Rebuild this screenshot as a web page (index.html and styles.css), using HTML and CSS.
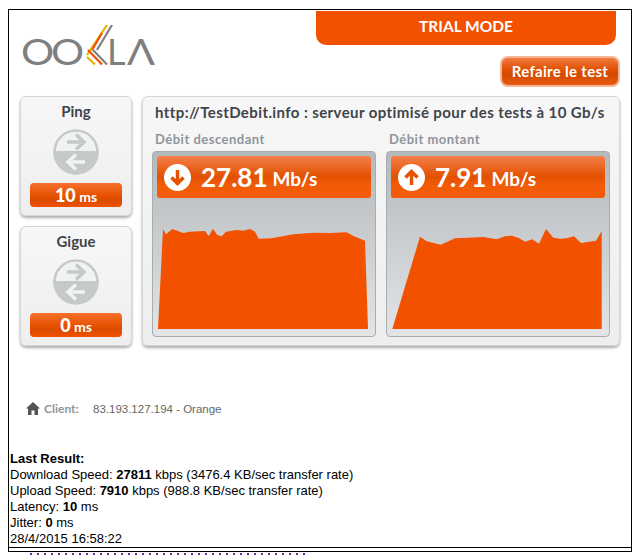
FILE: index.html
```html
<!DOCTYPE html>
<html lang="en">
<head>
<meta charset="UTF-8">
<title>Ookla speed test</title>
<link rel="stylesheet" href="styles.css">
</head>
<body>
<div class="frame">
    <div class="widget">
        <div class="header">
            <svg class="logo" width="140" height="50" viewBox="0 0 140 50">
                <g class="logo-text">
                    <text transform="translate(-1 39.500) scale(1.150 1)">O</text>
                    <text transform="translate(29 39.500) scale(1.150 1)">O</text>
                    <text transform="translate(85 39.500)">L</text>
                    <text transform="translate(105 39.500) scale(1.150 1)">Λ</text>
                </g>
                <g fill="none" stroke-width="2.200">
                    <path d="M65 30L85 0" stroke="#eab308"/>
                    <path d="M70 25L80 8" stroke="#f25100"/>
                    <path d="M75 25L90 0" stroke="#808080"/>
                    <path d="M65 32L73 39.500" stroke="#eab308"/>
                    <path d="M66 25L80 39.500" stroke="#f25100"/>
                    <path d="M71 25L85 39.500" stroke="#808080"/>
                </g>
            </svg>
            <div class="header-right">
                <div class="trial">TRIAL MODE</div>
                <div class="retest">Refaire le test</div>
            </div>
        </div>
        <div class="main">
            <div class="side">
                <div class="card">
                    <div class="card-title">Ping</div>
                    <svg class="ping-icon" width="46" height="46" viewBox="0 0 46 46">
                        <circle cx="23" cy="23" r="21.500" fill="#f1f2f2" stroke="#c5c9ca" stroke-width="2.500"/>
                        <path d="M0.500 22H45.500A22.500 22.500 0 0 1 0.500 22Z" fill="#c5c9ca"/>
                        <path d="M14 13H30M23 5.500L31 13L23 20.500" fill="none" stroke="#c5c9ca" stroke-width="3.500"/>
                        <path d="M32 33H16M23 25.500L15 33L23 40.500" fill="none" stroke="#f1f2f2" stroke-width="3.500"/>
                    </svg>
                    <div class="pill"><b>10</b> ms</div>
                </div>
                <div class="card">
                    <div class="card-title">Gigue</div>
                    <svg class="ping-icon" width="46" height="46" viewBox="0 0 46 46">
                        <circle cx="23" cy="23" r="21.500" fill="#f1f2f2" stroke="#c5c9ca" stroke-width="2.500"/>
                        <path d="M0.500 22H45.500A22.500 22.500 0 0 1 0.500 22Z" fill="#c5c9ca"/>
                        <path d="M14 13H30M23 5.500L31 13L23 20.500" fill="none" stroke="#c5c9ca" stroke-width="3.500"/>
                        <path d="M32 33H16M23 25.500L15 33L23 40.500" fill="none" stroke="#f1f2f2" stroke-width="3.500"/>
                    </svg>
                    <div class="pill"><b>0</b> ms</div>
                </div>
            </div>
            <div class="panel">
                <div class="panel-title">http://TestDebit.info : serveur optimisé pour des tests à 10 Gb/s</div>
                <div class="gauges">
                    <div class="gauge-col">
                        <div class="gauge-label">Débit descendant</div>
                        <div class="gauge">
                            <div class="speed">
                                <svg width="27" height="27" viewBox="0 0 27 27">
                                    <circle cx="13.500" cy="13.500" r="13.500" fill="#fff"/>
                                    <path d="M13.500 6V19M7.500 13.500L13.500 19.500L19.500 13.500" fill="none" stroke="#e65100" stroke-width="3.500"/>
                                </svg>
                                <span class="speed-num">27.81</span> <span class="speed-unit">Mb/s</span>
                            </div>
                            <svg class="chart" width="214" height="131" viewBox="0 0 214 131">
                                <polygon fill="#f25100" points="1,131 6,31.3 9,36.3 15.3,31 26.3,35 33,33.7 48,33 51.7,38 56,30.7 60.3,37 64.7,38.3 69,33.7 79.7,32 86.3,32.7 93,31 98,33.7 101.7,40.7 114.7,40.3 136.3,36.3 156.3,34.7 173,35 189.7,34.3 196.3,38 208,42.7 211,131"/>
                            </svg>
                        </div>
                    </div>
                    <div class="gauge-col">
                        <div class="gauge-label">Débit montant</div>
                        <div class="gauge">
                            <div class="speed">
                                <svg width="27" height="27" viewBox="0 0 27 27">
                                    <circle cx="13.500" cy="13.500" r="13.500" fill="#fff"/>
                                    <path d="M13.500 21V8M7.500 13.500L13.500 7.500L19.500 13.500" fill="none" stroke="#e65100" stroke-width="3.500"/>
                                </svg>
                                <span class="speed-num">7.91</span> <span class="speed-unit">Mb/s</span>
                            </div>
                            <svg class="chart" width="214" height="131" viewBox="0 0 214 131">
                                <polygon fill="#f25100" points="1.3,131 29,38.7 35.7,43.3 49.7,46.7 64,40.3 92.3,39 105.7,41.3 114,38.3 120.7,37.7 127.3,39.7 134,43.7 141.3,41.3 148,45.7 155,31 162.3,39.7 169,40.7 175.7,40.3 183,38.3 190,45 205,42.7 210.7,33 210.7,131"/>
                            </svg>
                        </div>
                    </div>
                </div>
            </div>
        </div>
        <div class="client">
            <svg width="14" height="13" viewBox="0 0 14 13">
                <path d="M7 0L14 6.500H12V13H8.500V8.500H5.500V13H2V6.500H0Z" fill="#555"/>
            </svg>
            <span class="client-label">Client:</span>
            <span class="client-value">83.193.127.194 - Orange</span>
        </div>
    </div>
    <div class="result">
        <b>Last Result:</b><br>
        Download Speed: <b>27811</b> kbps (3476.4 KB/sec transfer rate)<br>
        Upload Speed: <b>7910</b> kbps (988.8 KB/sec transfer rate)<br>
        Latency: <b>10</b> ms<br>
        Jitter: <b>0</b> ms<br>
        28/4/2015 16:58:22
    </div>
</div>
<div class="below"></div>
</body>
</html>
```

FILE: styles.css
```css
* {
    box-sizing: border-box;
}

html {
    overflow: hidden;
}

body {
    margin: 9px 8px 0;
    background-color: #fff;
    font-family: "Liberation Sans", Arial, sans-serif;
}

.frame {
    width: 624px;
    height: 543px;
    border: 1px solid #000;
    display: flex;
    flex-direction: column;
    justify-content: space-between;
}

.widget {
    padding: 0 11px;
    font-family: Lato, sans-serif;
}

.header {
    height: 86px;
    display: flex;
    justify-content: space-between;
}

.logo {
    margin: 15px 0 0 2px;
}

.logo-text {
    fill: #808080;
    font-family: Lato, sans-serif;
    font-size: 36px;
    font-weight: 400;
}

.header-right {
    display: flex;
    flex-direction: column;
    align-items: flex-end;
}

.trial {
    width: 300px;
    height: 34px;
    margin: 1px 4px 0 0;
    background-color: #f25100;
    border-radius: 0 0 10px 10px;
    color: #fff;
    font-size: 15.500px;
    font-weight: 700;
    line-height: 30px;
    text-align: center;
}

.retest {
    width: 120px;
    height: 31px;
    margin-top: 11px;
    border: 2px solid #f3b596;
    border-radius: 8px;
    background: linear-gradient(#f07a40, #e05000 45%, #d24b00 60%, #e85a10);
    color: #fff;
    font-size: 15px;
    font-weight: 700;
    line-height: 27px;
    text-align: center;
    letter-spacing: 0.3px;
}

.main {
    display: flex;
    gap: 10px;
    height: 250px;
}

.side {
    width: 112px;
    display: flex;
    flex-direction: column;
    justify-content: space-between;
}

.card,
.panel {
    background: linear-gradient(#f7f7f7, #eeeeee);
    border: 1px solid #d4d6d8;
    border-radius: 6px;
    box-shadow: 0 2px 3px #a9adb0;
}

.card {
    height: 120px;
    padding: 0 9px;
    display: flex;
    flex-direction: column;
    align-items: center;
}

.card-title {
    margin-top: 5px;
    height: 27px;
    color: #3f444a;
    font-size: 15px;
    font-weight: 700;
}

.ping-icon {
    display: block;
}

.pill {
    width: 92px;
    height: 24px;
    margin-top: 8px;
    border-radius: 4px;
    background: linear-gradient(#f4702c, #e65100 55%, #d84c00 70%, #f25100);
    color: #fff;
    font-size: 14px;
    font-weight: 700;
    line-height: 24px;
    text-align: center;
}

.pill b {
    font-size: 18px;
}

.panel {
    width: 478px;
    padding: 0 9px;
}

.panel-title {
    margin: 6px 0 0 3px;
    height: 28px;
    color: #3f444a;
    font-size: 15px;
    font-weight: 700;
    letter-spacing: 0.4px;
    white-space: nowrap;
}

.gauges {
    display: flex;
    gap: 10px;
}

.gauge-col {
    width: 224px;
}

.gauge-label {
    height: 20px;
    margin-left: 3px;
    color: #8e959c;
    font-size: 13px;
    font-weight: 700;
    letter-spacing: 0.5px;
}

.gauge {
    height: 186px;
    padding: 4px;
    border: 1px solid #a8adb0;
    border-radius: 4px;
    background: linear-gradient(#b4b9bd, #e2e4e5);
}

.speed {
    height: 42px;
    padding: 0 7px;
    display: flex;
    align-items: center;
    border-radius: 3px;
    background: linear-gradient(#f4804a, #e25000 50%, #f25c08 70%, #f25c08);
    color: #fff;
    font-weight: 700;
}

.speed-num {
    margin: 0 5px 0 10px;
    font-size: 26px;
}

.speed-unit {
    font-size: 19px;
    margin-top: 3px;
}

.chart {
    display: block;
}

.client {
    margin: 55px 0 0 6px;
    display: flex;
    align-items: center;
    font-size: 12px;
}

.client-label {
    margin-left: 4px;
    width: 49px;
    color: #8e959c;
    font-weight: 700;
}

.client-value {
    font-family: "Liberation Sans", Arial, sans-serif;
    font-size: 11.500px;
    color: #666;
}

.result {
    height: 97px;
    margin-bottom: 3px;
    border-bottom: 1px solid #000;
    padding-left: 1px;
    font-size: 13px;
    line-height: 16px;
    color: #000;
}

.below {
    height: 2px;
    width: 280px;
    margin: 1px 0 0 22px;
    background: repeating-linear-gradient(90deg, #6b2a8c 0 2px, transparent 2px 7px);
}
```
